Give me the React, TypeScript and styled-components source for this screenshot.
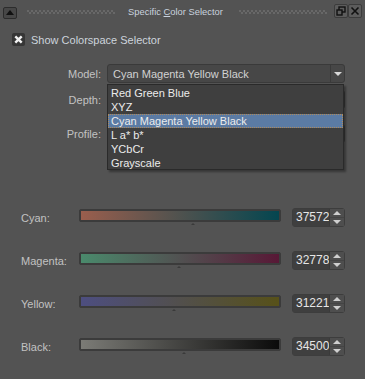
import React from "react";
import styled, { createGlobalStyle } from "styled-components";

const Global = createGlobalStyle`
  html, body { margin: 0; padding: 0; background: #535353; }
  body { width: 365px; height: 379px; overflow: hidden; }
  * { box-sizing: border-box; }
`;

const FONT = `"Liberation Sans", Arial, sans-serif`;

const Window = styled.div`
  position: relative;
  width: 365px;
  height: 379px;
  background: #535353;
  font-family: ${FONT};
  font-size: 11px;
  color: #c6c6c6;
  display: flex;
  flex-direction: column;
`;

const TitleBar = styled.div`
  height: 22px;
  display: flex;
  align-items: center;
  padding: 0 3px;
`;

const CollapseBtn = styled.div`
  width: 14px;
  height: 12px;
  margin-top: 3px;
  border: 1px solid #2c2c2c;
  border-radius: 2px;
  background: #474747;
  display: flex;
  align-items: center;
  justify-content: center;
`;

const Grip = styled.div<{ $ml: number; $mr: number }>`
  flex: 1;
  height: 4px;
  margin: 1px ${(p) => p.$mr}px 0 ${(p) => p.$ml}px;
  background-image: linear-gradient(90deg, #686868 50%, transparent 50%),
    linear-gradient(90deg, transparent 50%, #686868 50%);
  background-size: 4px 2px, 4px 2px;
  background-position: 0 0, 0 2px;
  background-repeat: repeat-x;
`;

const Title = styled.div`
  font-size: 9.4px;
  color: #c9d2de;
  white-space: nowrap;
  margin-top: 1px;
`;

const WinBtn = styled.div`
  width: 14px;
  height: 14px;
  border: 1px solid #3c3c3c;
  border-radius: 2px;
  background: #5c5c5c;
  display: flex;
  align-items: center;
  justify-content: center;
`;

const CheckRow = styled.div`
  display: flex;
  align-items: center;
  gap: 6px;
  margin: 11px 0 0 12px;
  font-size: 11px;
  color: #cdd3dc;
`;

const CheckBox = styled.div`
  width: 13px;
  height: 13px;
  border-radius: 2px;
  background: #363636;
  display: flex;
  align-items: center;
  justify-content: center;
`;

const Form = styled.div`
  position: relative;
  display: grid;
  grid-template-columns: 101px 238px;
  column-gap: 6px;
  margin-top: 18px;
`;

const FormLabel = styled.div<{ $mt: number }>`
  text-align: right;
  align-self: center;
  margin-top: ${(p) => p.$mt}px;
  color: #c2c2c2;
`;

const Combo = styled.div<{ $mt: number }>`
  height: 19px;
  margin-top: ${(p) => p.$mt}px;
  border: 1px solid #3a3a3a;
  border-radius: 3px;
  background: #474747;
  display: flex;
  align-items: center;
  color: #d2d2d2;
`;

const ComboText = styled.div`
  flex: 1;
  padding-left: 5px;
  font-size: 11px;
`;

const ComboArrow = styled.div`
  width: 14px;
  height: 100%;
  border-left: 1px solid #3a3a3a;
  display: flex;
  align-items: center;
  justify-content: center;
`;

const Popup = styled.div`
  position: absolute;
  left: 107px;
  top: 20px;
  width: 237px;
  height: 86px;
  background: #3f3f3f;
  border: 1px solid #2a2a2a;
  box-shadow: 2px 2px 2px rgba(0, 0, 0, 0.35);
  padding: 1px 0;
  display: flex;
  flex-direction: column;
`;

const PopupItem = styled.div<{ $sel?: boolean }>`
  height: 14px;
  line-height: 14px;
  padding-left: 3px;
  font-size: 11px;
  color: #ececec;
  background: ${(p) => (p.$sel ? "#5b7ba4" : "transparent")};
  outline: ${(p) => (p.$sel ? "1px dotted #b08a5a" : "none")};
  outline-offset: -1px;
`;

const Sliders = styled.div`
  display: grid;
  grid-template-columns: 79px 202px 64px;
  row-gap: 24px;
  margin-top: 65px;
`;

const SliderLabel = styled.div`
  padding-left: 21px;
  align-self: center;
  color: #c2c2c2;
`;

const SliderCell = styled.div`
  position: relative;
  padding-top: 1px;
  height: 19px;
`;

const Bar = styled.div`
  height: 13px;
  border: 1px solid #3b3b3b;
  border-radius: 2px;
  background: #3b3b3b;
  padding: 1px;
`;

const Fill = styled.div`
  height: 100%;
`;

const Tick = styled.div`
  position: absolute;
  top: 15px;
  width: 0;
  height: 0;
  border-left: 2px solid transparent;
  border-right: 2px solid transparent;
  border-bottom: 2px solid #3a3a3a;
`;

const Spin = styled.div`
  height: 19px;
  margin-left: 11px;
  border: 1px solid #3d3d3d;
  border-radius: 3px;
  background: #454545;
  display: flex;
`;

const SpinValue = styled.div`
  flex: 1;
  background: #3f3f3f;
  color: #e6e6e6;
  font-size: 12px;
  line-height: 17px;
  padding-left: 3px;
`;

const SpinButtons = styled.div`
  width: 15px;
  display: flex;
  flex-direction: column;
  border-left: 1px solid #3a3a3a;
  background: #4e4e4e;
`;

const SpinBtn = styled.div`
  flex: 1;
  display: flex;
  align-items: center;
  justify-content: center;
  & + & { border-top: 1px solid #444; }
`;

const UpTri = ({ color = "#cfcfcf" }: { color?: string }) => (
  <svg width="8" height="4" viewBox="0 0 8 4">
    <polygon points="0,4 4,0 8,4" fill={color} />
  </svg>
);
const DownTri = ({ color = "#cfcfcf" }: { color?: string }) => (
  <svg width="8" height="4" viewBox="0 0 8 4">
    <polygon points="0,0 8,0 4,4" fill={color} />
  </svg>
);

const sliders = [
  { label: "Cyan:", from: "#9a5e4d", to: "#044650", tick: 112, value: "37572" },
  { label: "Magenta:", from: "#4a8a6c", to: "#581836", tick: 98, value: "32778" },
  { label: "Yellow:", from: "#4d4e80", to: "#575119", tick: 93, value: "31221" },
  { label: "Black:", from: "#7b7b76", to: "#0b0b0b", tick: 103, value: "34500" },
];

export default function App() {
  return (
    <>
      <Global />
      <Window>
        <TitleBar>
          <CollapseBtn>
            <svg width="8" height="5" viewBox="0 0 8 5">
              <polygon points="0,5 4,0 8,5" fill="#111" />
            </svg>
          </CollapseBtn>
          <Grip $ml={10} $mr={13} />
          <Title>
            Specific <u>C</u>olor Selector
          </Title>
          <Grip $ml={16} $mr={7} />
          <WinBtn>
            <svg width="10" height="10" viewBox="0 0 10 10">
              <rect x="3" y="1" width="6" height="5" fill="none" stroke="#111" strokeWidth="1.4" />
              <rect x="1" y="4" width="5" height="5" fill="#5c5c5c" stroke="#111" strokeWidth="1.4" />
            </svg>
          </WinBtn>
          <WinBtn>
            <svg width="10" height="10" viewBox="0 0 10 10">
              <path d="M1.5 1.5 L8.5 8.5 M8.5 1.5 L1.5 8.5" stroke="#111" strokeWidth="1.6" />
            </svg>
          </WinBtn>
        </TitleBar>

        <CheckRow>
          <CheckBox>
            <svg width="9" height="9" viewBox="0 0 9 9">
              <path d="M1.3 1.3 L7.7 7.7 M7.7 1.3 L1.3 7.7" stroke="#f2f2f2" strokeWidth="2.4" />
            </svg>
          </CheckBox>
          Show Colorspace Selector
        </CheckRow>

        <Form>
          <FormLabel $mt={0}>Model:</FormLabel>
          <Combo $mt={0}>
            <ComboText>Cyan Magenta Yellow Black</ComboText>
            <ComboArrow>
              <svg width="8" height="4" viewBox="0 0 8 4">
                <polygon points="0,0 8,0 4,4" fill="#d8d8d8" />
              </svg>
            </ComboArrow>
          </Combo>
          <FormLabel $mt={7}>Depth:</FormLabel>
          <Combo $mt={7} />
          <FormLabel $mt={15}>Profile:</FormLabel>
          <Combo $mt={15} />
          <Popup>
            <PopupItem>Red Green Blue</PopupItem>
            <PopupItem>XYZ</PopupItem>
            <PopupItem $sel>Cyan Magenta Yellow Black</PopupItem>
            <PopupItem>L a* b*</PopupItem>
            <PopupItem>YCbCr</PopupItem>
            <PopupItem>Grayscale</PopupItem>
          </Popup>
        </Form>

        <Sliders>
          {sliders.map((s) => (
            <React.Fragment key={s.label}>
              <SliderLabel>{s.label}</SliderLabel>
              <SliderCell>
                <Bar>
                  <Fill style={{ background: `linear-gradient(90deg, ${s.from}, ${s.to})` }} />
                </Bar>
                <Tick style={{ left: s.tick }} />
              </SliderCell>
              <Spin>
                <SpinValue>{s.value}</SpinValue>
                <SpinButtons>
                  <SpinBtn>
                    <UpTri />
                  </SpinBtn>
                  <SpinBtn>
                    <DownTri />
                  </SpinBtn>
                </SpinButtons>
              </Spin>
            </React.Fragment>
          ))}
        </Sliders>
      </Window>
    </>
  );
}
